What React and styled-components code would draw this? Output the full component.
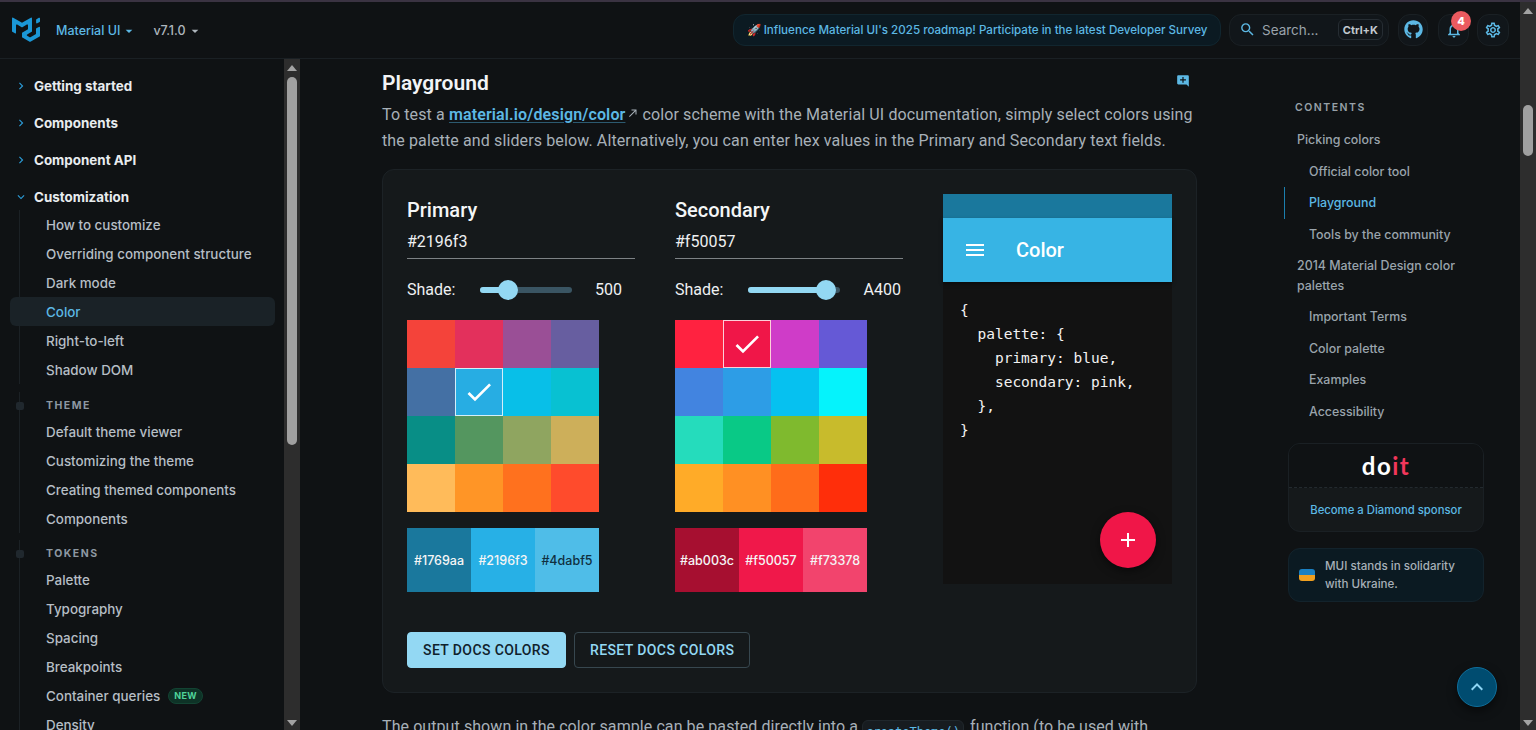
import styled, { createGlobalStyle } from 'styled-components';
import { MdSearch, MdNotificationsNone, MdOutlineSettings, MdAddComment, MdCheck, MdMenu, MdAdd, MdKeyboardArrowUp, MdChevronRight, MdExpandMore, MdArrowDropDown, MdNorthEast } from 'react-icons/md';
import { FaGithub } from 'react-icons/fa';

const BLUE = '#5cb8e4';
const SANS = '"Inter", "Noto Sans", sans-serif';
const ROBOTO = 'Roboto, "Liberation Sans", sans-serif';

const GlobalStyle = createGlobalStyle`
  html, body {
    margin: 0;
    height: 100%;
    overflow: hidden;
    background: #0f1214;
  }
  * { box-sizing: border-box; }
`;

const Shell = styled.div`
  position: relative;
  width: 1536px;
  height: 730px;
  overflow: hidden;
  font-family: ${SANS};
  background: #0f1214;
`;

const TopStrip = styled.div`
  height: 2px;
  background: #3a3342;
`;

const Frame = styled.div`
  display: flex;
  height: 728px;
`;

const Page = styled.div`
  width: 1520px;
  display: flex;
  flex-direction: column;
`;

// Header
const Header = styled.header`
  height: 57px;
  flex: none;
  display: flex;
  align-items: center;
  padding: 0 11px 1px 12px;
  border-bottom: 1px solid #1a2024;
`;

const LogoMark = styled.svg`
  width: 28px;
  height: 25px;
  fill: #1b97d6;
  margin-right: 16px;
`;

const HeaderMenu = styled.span`
  display: inline-flex;
  align-items: center;
  margin-top: 2px;
  font-size: 12.5px;
  font-weight: 500;
  color: ${({ $accent }) => ($accent ? BLUE : '#aeb6bd')};
  margin-right: ${({ $gap }) => $gap}px;
  svg { font-size: 16px; margin-left: 1px; color: ${({ $accent }) => ($accent ? BLUE : '#aeb6bd')}; }
`;

const HeaderRight = styled.div`
  margin-left: auto;
  display: flex;
  align-items: center;
`;

const Banner = styled.div`
  width: 488px;
  height: 32px;
  border-radius: 12px;
  border: 1px solid #11262f;
  background: #0b1a22;
  color: ${BLUE};
  font-size: 11.6px;
  font-weight: 500;
  display: flex;
  align-items: center;
  justify-content: center;
  white-space: nowrap;
  margin-right: 8px;
`;

const SearchBox = styled.div`
  width: 160px;
  height: 32px;
  border-radius: 12px;
  border: 1px solid #1a2024;
  background: #11161a;
  display: flex;
  align-items: center;
  padding: 0 5px 0 9px;
  margin-right: 9px;
  color: #9aa3ab;
  font-size: 13.5px;
  svg { color: ${BLUE}; font-size: 17px; margin-right: 6px; }
`;

const KeyHint = styled.kbd`
  margin-left: auto;
  height: 21px;
  padding: 0 4px;
  border-radius: 6px;
  border: 1px solid #262d33;
  font-family: ${SANS};
  font-size: 11px;
  font-weight: 700;
  color: #c2c9cf;
  display: flex;
  align-items: center;
`;

const IconButton = styled.div`
  position: relative;
  width: ${({ $w }) => $w}px;
  height: 32px;
  border-radius: 12px;
  border: 1px solid #1a2024;
  background: #11161a;
  color: ${BLUE};
  display: flex;
  align-items: center;
  justify-content: center;
  font-size: ${({ $size }) => $size || 18}px;
  margin-left: ${({ $gap }) => $gap || 0}px;
`;

const Badge = styled.span`
  position: absolute;
  top: -4px;
  right: -3px;
  width: 20px;
  height: 20px;
  border-radius: 50%;
  background: #eb5a5f;
  color: #fff;
  font-size: 11px;
  font-weight: 800;
  display: flex;
  align-items: center;
  justify-content: center;
`;

// Sidebar
const Body = styled.div`
  flex: 1;
  display: flex;
  min-height: 0;
`;

const Sidebar = styled.nav`
  width: 284px;
  flex: none;
  padding-top: 12px;
  overflow: hidden;
`;

const TopItem = styled.div`
  height: 29px;
  margin-bottom: ${({ $tight }) => ($tight ? -1 : 8)}px;
  display: flex;
  align-items: center;
  padding-left: 14px;
  font-size: 13.4px;
  font-weight: 700;
  color: #e8ecef;
  svg { font-size: 14px; color: #2b9bd6; margin-right: 6px; flex: none; }
`;

const Group = styled.div`
  margin-left: 19px;
  border-left: 1px solid #1b2125;
`;

const GroupLabel = styled.div`
  position: relative;
  height: 25px;
  margin-top: ${({ $top }) => $top}px;
  padding: 2px 0 0 26px;
  display: flex;
  align-items: center;
  font-size: 10.5px;
  font-weight: 700;
  letter-spacing: 1.5px;
  color: #8d98a2;

  &::before {
    content: '';
    position: absolute;
    left: -4px;
    top: 10px;
    width: 8px;
    height: 8px;
    border-radius: 2px;
    background: #20282e;
  }
`;

const NavItem = styled.div`
  position: relative;
  height: 29px;
  margin-left: -10px;
  margin-right: 9px;
  padding-left: 36px;
  border-radius: 6px;
  display: flex;
  align-items: center;
  gap: 8px;
  font-size: 13.4px;
  font-weight: 500;
  color: ${({ $active }) => ($active ? BLUE : '#b6bec5')};
  background: ${({ $active }) => ($active ? '#1a2227' : 'transparent')};
`;

const NewTag = styled.span`
  height: 16px;
  padding: 0 5px;
  border-radius: 8px;
  background: #0e3327;
  border: 1px solid #134433;
  color: #4fd39a;
  font-size: 9px;
  font-weight: 700;
  letter-spacing: 0.3px;
  display: flex;
  align-items: center;
`;

// Scrollbars
const ScrollBar = styled.div`
  width: 16px;
  flex: none;
  background: #2d2d2d;
  display: flex;
  flex-direction: column;
  align-items: center;
  padding-top: ${({ $pad }) => $pad}px;
  height: 100%;
`;

const Arrow = styled.div`
  width: 0;
  height: 0;
  flex: none;
  border-left: 5px solid transparent;
  border-right: 5px solid transparent;
  ${({ $down }) => ($down ? 'border-top' : 'border-bottom')}: 6px solid #a3a3a3;
  ${({ $down }) => $down && 'margin-top: auto; margin-bottom: 4px;'}
`;

const Thumb = styled.div`
  width: 10px;
  flex: none;
  height: ${({ $h }) => $h}px;
  margin-top: ${({ $top }) => $top}px;
  border-radius: 5px;
  background: #a0a0a0;
`;

// Main column
const Content = styled.div`
  flex: 1;
  display: flex;
  padding-left: 82px;
  overflow: hidden;
`;

const Article = styled.main`
  width: 815px;
  flex: none;
  padding-top: 10px;
`;

const TitleRow = styled.div`
  height: 28px;
  display: flex;
  align-items: center;
  justify-content: space-between;
  padding-right: 7px;
  svg { color: ${BLUE}; font-size: 14px; margin-top: -5px; }
`;

const Title = styled.h2`
  margin: 0;
  font-family: ${ROBOTO};
  font-size: 21px;
  font-weight: 600;
  color: #f2f4f6;
`;

const Paragraph = styled.p`
  margin: ${({ $top }) => $top}px 0 0;
  font-family: ${ROBOTO};
  font-size: 16px;
  line-height: 26px;
  letter-spacing: ${({ $spacing }) => $spacing}px;
  color: #a7b0b8;
  white-space: nowrap;
`;

const DocLink = styled.a`
  color: ${BLUE};
  font-weight: 600;
  text-decoration: underline;
  text-decoration-color: #2c5a70;
  text-underline-offset: 2px;
`;

const LinkArrow = styled.span`
  display: inline-block;
  margin: 0 3px 0 2px;
  color: #a7b0b8;
  font-size: 12px;
  vertical-align: 1px;
`;

const InlineCode = styled.code`
  display: inline-block;
  height: 24px;
  padding: 0 3px;
  margin: 0 6px 0 0;
  border-radius: 6px;
  border: 1px solid #20272c;
  background: #171c20;
  font-family: "DejaVu Sans Mono", monospace;
  font-size: 12px;
  line-height: 22px;
  letter-spacing: 0;
  vertical-align: -4px;
  color: ${BLUE};
`;

const Card = styled.section`
  margin-top: 15px;
  height: 524px;
  padding: 24px;
  border-radius: 12px;
  border: 1px solid #1c2226;
  background: #15191b;
`;

const CardGrid = styled.div`
  display: grid;
  grid-template-columns: 228px 228px 229px;
  column-gap: 40px;
  font-family: ${ROBOTO};
`;

const Column = styled.div`
  display: flex;
  flex-direction: column;
`;

const ColumnTitle = styled.div`
  height: 32px;
  display: flex;
  align-items: center;
  font-size: 20px;
  font-weight: 500;
  color: #f4f6f7;
`;

const HexInput = styled.div`
  height: 33px;
  padding-bottom: 2px;
  display: flex;
  align-items: center;
  font-size: 16px;
  color: #eef0f2;
  border-bottom: 1px solid #7d8285;
`;

const ShadeRow = styled.div`
  height: 61px;
  display: flex;
  align-items: center;
  font-size: 16px;
  color: #eef0f2;
`;

const Slider = styled.div`
  position: relative;
  width: 92px;
  height: 6px;
  margin: 0 0 0 25px;
  border-radius: 3px;
  background: #3a5563;
`;

const SliderFill = styled.div`
  height: 100%;
  border-radius: 3px;
  background: #93d8f3;
`;

const SliderThumb = styled.div`
  position: absolute;
  top: -7px;
  width: 20px;
  height: 20px;
  margin-left: -10px;
  border-radius: 50%;
  background: #93d8f3;
`;

const ShadeValue = styled.span`
  margin-left: auto;
  padding-right: ${({ $pad }) => $pad}px;
`;

const PaletteGrid = styled.div`
  display: grid;
  grid-template-columns: repeat(4, 48px);
  grid-auto-rows: 48px;
`;

const Cell = styled.div`
  display: flex;
  align-items: center;
  justify-content: center;
  color: #fff;
  font-size: 32px;
  background: ${({ $color }) => $color};
  border: ${({ $selected }) => ($selected ? '1px solid rgba(255,255,255,0.8)' : 'none')};
`;

const SwatchRow = styled.div`
  display: grid;
  grid-template-columns: repeat(3, 64px);
  height: 64px;
  margin-top: 16px;
`;

const Swatch = styled.div`
  display: flex;
  align-items: center;
  justify-content: center;
  font-family: ${SANS};
  font-size: 12.5px;
  font-weight: 500;
  background: ${({ $color }) => $color};
  color: ${({ $dark }) => ($dark ? '#10303f' : '#f5f5f5')};
`;

const Preview = styled.div`
  position: relative;
  height: 390px;
  background: #121212;
`;

const StatusBar = styled.div`
  height: 24px;
  background: #1a789d;
`;

const AppBar = styled.div`
  height: 64px;
  padding-left: 20px;
  display: flex;
  align-items: center;
  gap: 29px;
  background: #37b4e4;
  color: #fff;
  font-size: 20px;
  font-weight: 500;
  box-shadow: 0 2px 4px rgba(0, 0, 0, 0.4);
  svg { font-size: 24px; }
`;

const CodeBlock = styled.pre`
  margin: 0;
  padding: 16px 17px;
  font-family: "DejaVu Sans Mono", monospace;
  font-size: 14.5px;
  line-height: 24px;
  color: #f2f2f2;
`;

const Fab = styled.div`
  position: absolute;
  right: 16px;
  bottom: 16px;
  width: 56px;
  height: 56px;
  border-radius: 50%;
  background: #f01648;
  color: #fff;
  font-size: 24px;
  display: flex;
  align-items: center;
  justify-content: center;
  box-shadow: 0 3px 8px rgba(0, 0, 0, 0.5);
`;

const ButtonRow = styled.div`
  display: flex;
  gap: 8px;
  margin-top: 40px;
`;

const DocsButton = styled.div`
  height: 36px;
  padding: 0 15px;
  border-radius: 4px;
  display: flex;
  align-items: center;
  font-family: ${ROBOTO};
  font-size: 14px;
  font-weight: 500;
  letter-spacing: 0.4px;
  color: ${({ $filled }) => ($filled ? '#10212b' : '#93d8f3')};
  background: ${({ $filled }) => ($filled ? '#93d8f3' : 'transparent')};
  border: 1px solid ${({ $filled }) => ($filled ? '#93d8f3' : '#37474f')};
`;

// Right contents column
const Toc = styled.aside`
  width: 200px;
  margin-left: 87px;
  flex: none;
  padding-top: 42px;
`;

const TocHeading = styled.div`
  padding-left: 11px;
  height: 14px;
  line-height: 14px;
  margin-bottom: 9px;
  font-size: 10.5px;
  font-weight: 600;
  letter-spacing: 1.5px;
  color: #97a1a9;
`;

const TocItem = styled.div`
  padding: 6px 16px 6px ${({ $sub }) => ($sub ? 24 : 12)}px;
  line-height: 19.5px;
  font-size: 12.4px;
  font-weight: 500;
  border-left: 1px solid ${({ $active }) => ($active ? '#1b7fae' : 'transparent')};
  color: ${({ $active }) => ($active ? BLUE : '#9aa4ac')};
`;

const SponsorCard = styled.div`
  margin: 16px 0 0 4px;
  height: 89px;
  border-radius: 12px;
  border: 1px solid #1a2024;
  background: #15191b;
  overflow: hidden;
`;

const SponsorLogo = styled.div`
  height: 44px;
  background: #0f1214;
  border-bottom: 1px dashed #232a2f;
  display: flex;
  align-items: center;
  justify-content: center;
  font-family: "Lato", sans-serif;
  font-size: 24px;
  font-weight: 700;
  color: #fff;
  letter-spacing: 1.5px;
  span { color: #f1375b; }
`;

const SponsorLink = styled.div`
  height: 43px;
  display: flex;
  align-items: center;
  justify-content: center;
  font-size: 11.3px;
  font-weight: 500;
  color: ${BLUE};
`;

const UkraineCard = styled.div`
  margin: 16px 0 0 4px;
  height: 54px;
  padding: 0 24px 0 10px;
  border-radius: 12px;
  border: 1px solid #13232c;
  background: #0b1a22;
  display: flex;
  align-items: center;
  gap: 10px;
  font-size: 11.6px;
  font-weight: 500;
  line-height: 18px;
  color: #a7b0b8;
`;

const Flag = styled.div`
  width: 16px;
  height: 12px;
  flex: none;
  border-radius: 3px;
  background: linear-gradient(#1a80c2 50%, #f0a020 50%);
`;

const BackToTop = styled.div`
  position: absolute;
  right: 39px;
  bottom: 23px;
  width: 40px;
  height: 40px;
  border-radius: 50%;
  border: 1px solid #0f6f9c;
  background: #004c70;
  color: #8fd6f5;
  font-size: 24px;
  display: flex;
  align-items: center;
  justify-content: center;
  box-shadow: 0 4px 10px rgba(0, 0, 0, 0.5);
`;

const primaryCells = [
  '#f4433a', '#e3305c', '#9a4f96', '#675ea0',
  '#4470a4', '#27ade3', '#08bfe8', '#08c1d2',
  '#088e86', '#54965f', '#8fa560', '#cdaf5a',
  '#ffbb5a', '#ff9526', '#ff711e', '#ff4b2c',
];

const secondaryCells = [
  '#ff2240', '#f01648', '#cf3cc8', '#6559d6',
  '#4284e0', '#2d9de6', '#06c1f0', '#05f3fc',
  '#25dcbc', '#09c986', '#7fba2e', '#c8bb2c',
  '#ffab28', '#ff9023', '#ff6c1a', '#ff2e0a',
];

const columns = [
  {
    title: 'Primary',
    hex: '#2196f3',
    percent: 30,
    shade: '500',
    pad: 13,
    cells: primaryCells,
    selected: 5,
    swatches: [
      { color: '#1a789d', label: '#1769aa' },
      { color: '#27b0e6', label: '#2196f3' },
      { color: '#4fbde8', label: '#4dabf5', dark: true },
    ],
  },
  {
    title: 'Secondary',
    hex: '#f50057',
    percent: 84,
    shade: 'A400',
    pad: 2,
    cells: secondaryCells,
    selected: 1,
    swatches: [
      { color: '#a60f30', label: '#ab003c' },
      { color: '#f0184a', label: '#f50057' },
      { color: '#f2446d', label: '#f73378' },
    ],
  },
];

const customizeItems = ['How to customize', 'Overriding component structure', 'Dark mode', 'Color', 'Right-to-left', 'Shadow DOM'];
const themeItems = ['Default theme viewer', 'Customizing the theme', 'Creating themed components', 'Components'];
const tokenItems = ['Palette', 'Typography', 'Spacing', 'Breakpoints', 'Container queries', 'Density'];

const tocItems = [
  { label: 'Picking colors' },
  { label: 'Official color tool', sub: true },
  { label: 'Playground', sub: true, active: true },
  { label: 'Tools by the community', sub: true },
  { label: '2014 Material Design color palettes' },
  { label: 'Important Terms', sub: true },
  { label: 'Color palette', sub: true },
  { label: 'Examples', sub: true },
  { label: 'Accessibility', sub: true },
];

const codeSample = `{
  palette: {
    primary: blue,
    secondary: pink,
  },
}`;

const PaletteColumn = ({ column }) => (
  <Column>
    <ColumnTitle>{column.title}</ColumnTitle>
    <HexInput>{column.hex}</HexInput>
    <ShadeRow>
      Shade:
      <Slider>
        <SliderFill style={{ width: `${column.percent}%` }} />
        <SliderThumb style={{ left: `${column.percent}%` }} />
      </Slider>
      <ShadeValue $pad={column.pad}>{column.shade}</ShadeValue>
    </ShadeRow>
    <PaletteGrid>
      {column.cells.map((color, index) => (
        <Cell key={index} $color={color} $selected={index === column.selected}>
          {index === column.selected && <MdCheck />}
        </Cell>
      ))}
    </PaletteGrid>
    <SwatchRow>
      {column.swatches.map((swatch) => (
        <Swatch key={swatch.label} $color={swatch.color} $dark={swatch.dark}>{swatch.label}</Swatch>
      ))}
    </SwatchRow>
  </Column>
);

const App = () => (
  <Shell>
    <GlobalStyle />
    <TopStrip />
    <Frame>
      <Page>
        <Header>
          <LogoMark viewBox="0 0 36 32">
            <path d="M30.343 21.976a1 1 0 00.502-.864l.018-5.787a1 1 0 01.502-.864l3.137-1.802a1 1 0 011.498.867v10.521a1 1 0 01-.502.867l-11.839 6.8a1 1 0 01-.994.001l-9.291-5.314a1 1 0 01-.504-.868v-5.305c0-.006.007-.01.013-.007.005.003.012 0 .012-.007v-.006c0-.004.002-.008.006-.01l7.652-4.396c.007-.004.004-.015-.004-.015a.008.008 0 01-.008-.008l.015-5.201a1 1 0 00-1.5-.87l-5.687 3.277a1 1 0 01-.998 0L6.666 9.7a1 1 0 00-1.499.866v9.4a1 1 0 01-1.496.869l-3.166-1.81a1 1 0 01-.504-.87l.028-16.43A1 1 0 011.527.86l10.845 6.229a1 1 0 00.996 0L24.21.86a1 1 0 011.498.868v16.434a1 1 0 01-.501.867l-5.678 3.27a1 1 0 00.004 1.735l3.132 1.783a1 1 0 00.993-.002l6.685-3.839zM31 7.234a1 1 0 001.514.857l3-1.8A1 1 0 0036 5.434V1.766A1 1 0 0034.486.91l-3 1.8a1 1 0 00-.486.857v3.668z" />
          </LogoMark>
          <HeaderMenu $accent $gap={16}>Material UI<MdArrowDropDown /></HeaderMenu>
          <HeaderMenu>v7.1.0<MdArrowDropDown /></HeaderMenu>
          <HeaderRight>
            <Banner>🚀 Influence Material UI's 2025 roadmap! Participate in the latest Developer Survey</Banner>
            <SearchBox>
              <MdSearch />
              Search...
              <KeyHint>Ctrl+K</KeyHint>
            </SearchBox>
            <IconButton $w={30} $size={19}><FaGithub /></IconButton>
            <IconButton $w={31} $gap={10}>
              <MdNotificationsNone />
              <Badge>4</Badge>
            </IconButton>
            <IconButton $w={32} $gap={8}><MdOutlineSettings /></IconButton>
          </HeaderRight>
        </Header>
        <Body>
          <Sidebar>
            <TopItem><MdChevronRight />Getting started</TopItem>
            <TopItem><MdChevronRight />Components</TopItem>
            <TopItem><MdChevronRight />Component API</TopItem>
            <TopItem $tight><MdExpandMore />Customization</TopItem>
            <Group>
              {customizeItems.map((item) => (
                <NavItem key={item} $active={item === 'Color'}>{item}</NavItem>
              ))}
            </Group>
            <Group>
              <GroupLabel $top={8}>THEME</GroupLabel>
              {themeItems.map((item) => <NavItem key={item}>{item}</NavItem>)}
            </Group>
            <Group>
              <GroupLabel $top={7}>TOKENS</GroupLabel>
              {tokenItems.map((item) => (
                <NavItem key={item}>
                  {item}
                  {item === 'Container queries' && <NewTag>NEW</NewTag>}
                </NavItem>
              ))}
            </Group>
          </Sidebar>
          <ScrollBar $pad={6}>
            <Arrow />
            <Thumb $h={368} $top={6} />
            <Arrow $down />
          </ScrollBar>
          <Content>
            <Article>
              <TitleRow>
                <Title>Playground</Title>
                <MdAddComment />
              </TitleRow>
              <Paragraph $top={5} $spacing={0.125}>
                To test a <DocLink>material.io/design/color</DocLink>
                <LinkArrow><MdNorthEast /></LinkArrow>
                color scheme with the Material UI documentation, simply select colors using
                <br />
                the palette and sliders below. Alternatively, you can enter hex values in the Primary and Secondary text fields.
              </Paragraph>
              <Card>
                <CardGrid>
                  {columns.map((column) => <PaletteColumn key={column.title} column={column} />)}
                  <Preview>
                    <StatusBar />
                    <AppBar><MdMenu />Color</AppBar>
                    <CodeBlock>{codeSample}</CodeBlock>
                    <Fab><MdAdd /></Fab>
                  </Preview>
                </CardGrid>
                <ButtonRow>
                  <DocsButton $filled>SET DOCS COLORS</DocsButton>
                  <DocsButton>RESET DOCS COLORS</DocsButton>
                </ButtonRow>
              </Card>
              <Paragraph $top={21} $spacing={0.08}>
                The output shown in the color sample can be pasted directly into a{' '}
                <InlineCode>createTheme()</InlineCode>
                function (to be used with
              </Paragraph>
            </Article>
            <Toc>
              <TocHeading>CONTENTS</TocHeading>
              {tocItems.map((item) => (
                <TocItem key={item.label} $sub={item.sub} $active={item.active}>{item.label}</TocItem>
              ))}
              <SponsorCard>
                <SponsorLogo>do<span>it</span></SponsorLogo>
                <SponsorLink>Become a Diamond sponsor</SponsorLink>
              </SponsorCard>
              <UkraineCard>
                <Flag />
                <div>MUI stands in solidarity with Ukraine.</div>
              </UkraineCard>
            </Toc>
          </Content>
        </Body>
      </Page>
      <ScrollBar $pad={6}>
        <Arrow />
        <Thumb $h={51} $top={91} />
        <Arrow $down />
      </ScrollBar>
    </Frame>
    <BackToTop><MdKeyboardArrowUp /></BackToTop>
  </Shell>
);

export default App;
